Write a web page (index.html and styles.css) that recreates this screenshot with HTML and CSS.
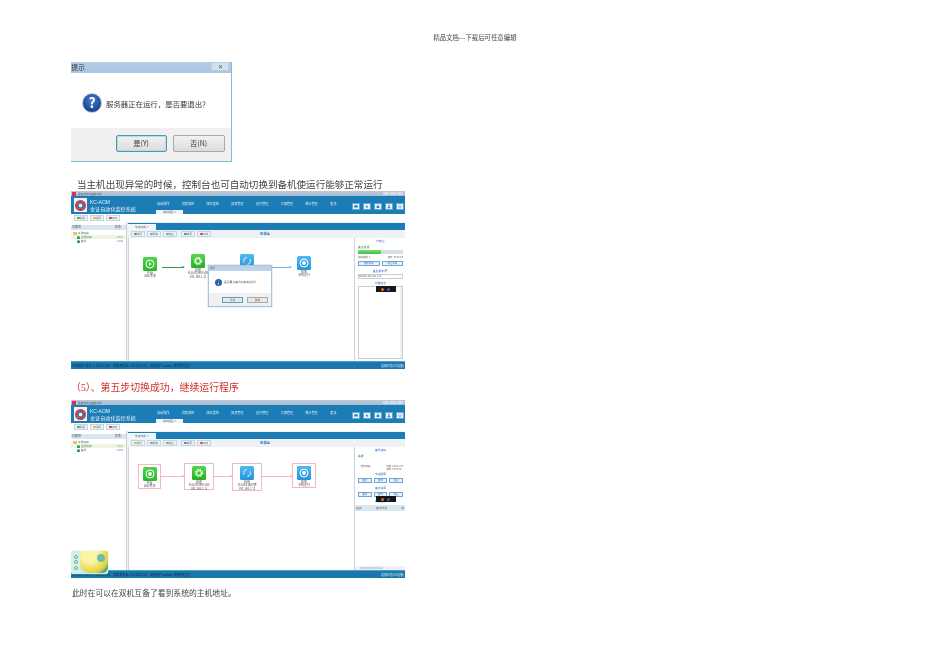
FILE: index.html
```html
<!DOCTYPE html>
<html lang="zh">
<head>
<meta charset="utf-8">
<title>精品文档</title>
<link rel="stylesheet" href="styles.css">
</head>
<body>
<svg class="defs" width="0" height="0" aria-hidden="true">
  <symbol id="i-play" viewBox="0 0 14 14"><circle cx="7" cy="7" r="4" fill="none" stroke="#fff" stroke-width="1"/><path d="M6 5l2.6 2L6 9z" fill="#fff"/></symbol>
  <symbol id="i-gear" viewBox="0 0 14 14"><circle cx="7" cy="7" r="2.6" fill="none" stroke="#fff" stroke-width="1.8" stroke-dasharray="1.6 .5"/><circle cx="7" cy="7" r="3.8" fill="none" stroke="#fff" stroke-width=".9" stroke-dasharray="1.4 1.6"/></symbol>
  <symbol id="i-sync" viewBox="0 0 14 14"><path d="M4 8.5A3.4 3.4 0 0 1 7 3.6M10 5.5A3.4 3.4 0 0 1 7 10.4" fill="none" stroke="#fff" stroke-width="1.1" stroke-dasharray="1.4 .6"/></symbol>
  <symbol id="i-stop" viewBox="0 0 14 14"><circle cx="7" cy="7" r="4" fill="none" stroke="#fff" stroke-width="1"/><circle cx="7" cy="7" r="1.9" fill="#fff"/></symbol>
  <symbol id="i-monitor" viewBox="0 0 8 8"><rect x="1.2" y="2" width="5.6" height="3.6" fill="#2a7fb4"/></symbol>
  <symbol id="i-cursor" viewBox="0 0 8 8"><path d="M2.5 1.5l3.4 3-1.6.2.8 1.6-.8.3-.7-1.6-1.1 1z" fill="#2a7fb4"/></symbol>
  <symbol id="i-lock" viewBox="0 0 8 8"><rect x="1.8" y="3.4" width="4.4" height="3" fill="#2a7fb4"/><path d="M2.8 3.4V2.6a1.2 1.2 0 0 1 2.4 0v.8" fill="none" stroke="#2a7fb4" stroke-width=".7"/></symbol>
  <symbol id="i-user" viewBox="0 0 8 8"><circle cx="4" cy="2.8" r="1.4" fill="#2a7fb4"/><path d="M1.6 6.6c.2-1.6 1.2-2 2.4-2s2.2.4 2.4 2z" fill="#2a7fb4"/></symbol>
  <symbol id="i-power" viewBox="0 0 8 8"><path d="M2.6 2.6a2.1 2.1 0 1 0 2.8 0" fill="none" stroke="#2a7fb4" stroke-width=".8"/><path d="M4 1.4v2.4" stroke="#2a7fb4" stroke-width=".8"/></symbol>
</svg>

<header class="running-head">精品文档---下载后可任意编辑</header>

<main class="sheet">
  <section class="msgbox">
    <div class="msg-title"><span class="msg-title-text">提示</span><span class="msg-close">✕</span></div>
    <div class="msg-body">
      <span class="msg-q">?</span>
      <span class="msg-text">服务器正在运行，是否要退出？</span>
    </div>
    <div class="msg-foot">
      <span class="msg-btn msg-btn-on">是(Y)</span>
      <span class="msg-btn msg-btn-no">否(N)</span>
    </div>
  </section>

  <p class="cap cap-one">当主机出现异常的时候，控制台也可自动切换到备机使运行能够正常运行</p>

  <section class="app">
    <div class="a-title"><span class="a-ico"></span><span class="a-title-text">金证自动化监控系统</span><span class="a-win"><i></i><i></i><i></i></span></div>
    <div class="a-banner">
      <div class="a-logo"><span></span></div>
      <div class="a-brand"><b>KC-AOM</b><span>金证自动化监控系统</span></div>
      <div class="a-navwrap">
        <nav class="a-nav"><span>自动操作</span><span>流程监控</span><span>版本发布</span><span>报表管理</span><span>运行管理</span><span>大屏管理</span><span>统计管理</span><span>更多</span></nav>
        <div class="a-tab">流程视图 ×</div>
      </div>
      <div class="a-tools">
        <svg><use href="#i-monitor"/></svg><svg><use href="#i-cursor"/></svg><svg><use href="#i-lock"/></svg><svg><use href="#i-user"/></svg><svg><use href="#i-power"/></svg>
      </div>
    </div>
    <div class="a-quick"><span><i class="dot dot-green"></i>刷新</span><span><i class="dot dot-amber"></i>关闭</span><span><i class="dot dot-red"></i>手动</span></div>
    <div class="a-body">
      <aside class="a-left">
        <div class="a-lhead"><span>功能项</span><span>状态</span></div>
        <div class="a-row"><span><i class="folder"></i>系统切换</span></div>
        <div class="a-row a-row-in a-row-on"><span><i class="person"></i>主机切换</span><em class="ok">2321</em></div>
        <div class="a-row a-row-in"><span><i class="person"></i>备机</span><em>2184</em></div>
      </aside>
      <div class="a-main">
        <div class="a-strip"><span>节点流程 ×</span></div>
        <div class="a-bar"><span><i class="dot dot-green"></i>运行</span><span><i class="dot dot-grey"></i>暂停</span><span><i class="dot dot-grey"></i>停止</span><span class="a-bar-sep"><i class="dot dot-blue"></i>设置</span><span><i class="dot dot-red"></i>手动</span><b>已停止</b></div>
        <div class="a-work">
          <div class="a-canvas">
            <div class="node n1"><svg class="ic g1"><use href="#i-play"/></svg><span>开始</span><span>自动考虑</span></div>
            <div class="node n2"><svg class="ic g2"><use href="#i-gear"/></svg><span>启用</span><span>节点A切换节点B</span><span>192.168.1.11</span></div>
            <div class="node n3"><svg class="ic b1"><use href="#i-sync"/></svg></div>
            <div class="node n4"><svg class="ic b1"><use href="#i-stop"/></svg><span>结束</span><span>系统运行</span></div>
            <i class="link l-green"></i>
            <i class="link l-blue"></i>
            <div class="mini">
              <div class="mini-title">提示</div>
              <div class="mini-body"><span class="mini-q">i</span><span>是否要从备机切换到主机？</span></div>
              <div class="mini-foot"><span class="mini-on">重试</span><span>取消</span></div>
            </div>
          </div>
          <aside class="a-right">
            <div class="r-head">已停止</div>
            <div class="r-green">备主进程</div>
            <div class="r-progress"><span></span></div>
            <div class="r-kv"><span>切换次数: 1</span><span>耗时: 00:00:00</span></div>
            <div class="r-btns"><span>启动切换</span><span>停止切换</span></div>
            <div class="r-head">备主服务(IP)</div>
            <div class="r-input">NMAXA 192.168.1.10</div>
            <div class="r-head r-gap">线路信息</div>
            <div class="r-list"><i></i></div>
            <div class="blackbar"><i></i><i></i></div>
          </aside>
        </div>
      </div>
    </div>
    <div class="a-status"><span>本机版本: 版本: 1.2013.10.01</span><span>服务器地址: 127.0.0.1:80</span><span>当前用户: admin [系统管理员]</span><em>连接状态[已连接]</em></div>
  </section>

  <p class="cap cap-red">（5）、第五步切换成功，继续运行程序</p>

  <section class="app">
    <div class="a-title"><span class="a-ico"></span><span class="a-title-text">金证自动化监控系统</span><span class="a-win"><i></i><i></i><i></i></span></div>
    <div class="a-banner">
      <div class="a-logo"><span></span></div>
      <div class="a-brand"><b>KC-AOM</b><span>金证自动化监控系统</span></div>
      <div class="a-navwrap">
        <nav class="a-nav"><span>自动操作</span><span>流程监控</span><span>版本发布</span><span>报表管理</span><span>运行管理</span><span>大屏管理</span><span>统计管理</span><span>更多</span></nav>
        <div class="a-tab">流程视图 ×</div>
      </div>
      <div class="a-tools">
        <svg><use href="#i-monitor"/></svg><svg><use href="#i-cursor"/></svg><svg><use href="#i-lock"/></svg><svg><use href="#i-user"/></svg><svg><use href="#i-power"/></svg>
      </div>
    </div>
    <div class="a-quick"><span><i class="dot dot-green"></i>刷新</span><span><i class="dot dot-amber"></i>关闭</span><span><i class="dot dot-red"></i>手动</span></div>
    <div class="a-body">
      <aside class="a-left">
        <div class="a-lhead"><span>功能项</span><span>状态</span></div>
        <div class="a-row"><span><i class="folder"></i>系统切换</span></div>
        <div class="a-row a-row-in a-row-on"><span><i class="person"></i>主机切换</span><em class="ok">2321</em></div>
        <div class="a-row a-row-in"><span><i class="person"></i>备机</span><em>2184</em></div>
        <div class="lemon"><div class="lemon-side"><i></i><i></i><i></i></div><div class="lemon-fruit"><i></i></div></div>
      </aside>
      <div class="a-main">
        <div class="a-strip"><span>节点流程 ×</span></div>
        <div class="a-bar"><span><i class="dot dot-amber"></i>运行</span><span><i class="dot dot-grey"></i>暂停</span><span><i class="dot dot-grey"></i>停止</span><span class="a-bar-sep"><i class="dot dot-blue"></i>设置</span><span><i class="dot dot-red"></i>手动</span><b>已停止</b></div>
        <div class="a-work">
          <div class="a-canvas">
            <div class="node p1"><svg class="ic g1"><use href="#i-stop"/></svg><span>开始</span><span>自动考虑</span></div>
            <div class="node p2"><svg class="ic g2"><use href="#i-gear"/></svg><span>启用</span><span>节点A切换节点B</span><span>192.168.1.11</span></div>
            <div class="node p3"><svg class="ic b1"><use href="#i-sync"/></svg><span>启用</span><span>节点B主备切换</span><span>192.168.1.12</span></div>
            <div class="node p4"><svg class="ic b1"><use href="#i-stop"/></svg><span>结束</span><span>系统运行</span></div>
            <i class="link pl1"></i><i class="link pl2"></i><i class="link pl3"></i>
          </div>
          <aside class="a-right">
            <div class="r-head">备机切换</div>
            <div class="r-green r-tall">等候</div>
            <div class="r-check"><span>□ 自动切换</span><span>切换: 2014.1.20<br>耗时: 00:00:00</span></div>
            <div class="r-head">节点配置</div>
            <div class="r-btns r-three"><span>备份</span><span>启动</span><span>停止</span></div>
            <div class="r-head r-gap-b">备份设置</div>
            <div class="r-btns r-three"><span>备份</span><span>启动</span><span>停止</span></div>
            <div class="r-head r-gap-c">线路信息</div>
            <div class="r-table"><div class="r-thead"><span>名称</span><span>运行时间</span><span>状</span></div></div>
            <div class="r-scroll"><span></span></div>
            <div class="blackbar blackbar-low"><i></i><i></i></div>
          </aside>
        </div>
      </div>
    </div>
    <div class="a-status"><span>本机版本: 版本: 1.2013.10.01</span><span>服务器地址: 127.0.0.1:80</span><span>当前用户: admin [系统管理员]</span><em>连接状态[已连接]</em></div>
  </section>

  <p class="cap cap-last">此时在可以在双机互备了看到系统的主机地址。</p>
</main>
</body>
</html>
```
FILE: styles.css
```css
* { box-sizing: border-box; }
html, body { margin: 0; padding: 0; background: #fff; }
body { width: 950px; height: 672px; overflow: hidden; font-family: "Liberation Serif", "Noto Sans CJK SC", serif; color: #222; }
.defs { position: absolute; }
.running-head { padding-top: 34px; height: 42px; line-height: 8px; font-size: 6.4px; text-align: center; color: #444; filter: blur(.25px); }
.sheet { margin-left: 71px; width: 334px; }
.cap { margin: 0; height: 10px; line-height: 10px; white-space: nowrap; filter: blur(.25px); }
.cap-one { margin-top: 18px; margin-bottom: 1px; padding-left: 6px; font-size: 9.55px; color: #444; }
.cap-red { margin-top: 14px; margin-bottom: 7px; font-size: 9.9px; color: #d2332c; }
.cap-last { margin-top: 11px; padding-left: 1px; font-size: 7.8px; color: #444; }

/* first message box */
.msgbox { margin-top: 20px; width: 161px; height: 100px; display: flex; flex-direction: column; background: #fff; border-right: 1px solid #7cc0d8; border-bottom: 1px solid #7cc0d8; filter: blur(.5px); font-family: "Noto Sans CJK SC", sans-serif; overflow: hidden; }
.msg-title { height: 11px; flex: none; display: flex; justify-content: space-between; align-items: center; background: linear-gradient(#b4cde6, #a9c6e4); }
.msg-title-text { font-size: 7px; line-height: 9px; color: #333; }
.msg-close { width: 18px; height: 8px; margin: 0 2px 2px 0; line-height: 8px; text-align: center; font-size: 6px; color: #555; background: #d3e0ee; border: 1px solid #bccde0; border-top: 0; }
.msg-body { height: 55px; flex: none; display: flex; align-items: center; gap: 4px; padding: 5px 0 0 11px; }
.msg-q { width: 20px; height: 20px; border-radius: 50%; flex: none; text-align: center; line-height: 17px; font-size: 14px; font-weight: 700; color: #fff; background: radial-gradient(circle at 50% 35%, #4a7fd0, #1d4596 70%); border: 1.5px solid #b9c7da; }
.msg-text { font-size: 7.4px; color: #333; white-space: nowrap; }
.msg-foot { flex: 1; display: flex; gap: 6px; padding: 7px 6px 0 45px; background: #f0f0f0; }
.msg-btn { height: 17px; line-height: 15px; text-align: center; font-size: 7px; color: #333; border-radius: 2px; background: linear-gradient(#f2f2f2, #dcdcdc); border: 1px solid #a9a9a9; }
.msg-btn-on { width: 51px; border-color: #4f97b3; box-shadow: inset 0 0 0 1px #b4dcec; }
.msg-btn-no { width: 53px; }

/* application screenshot */
.app { position: relative; width: 334px; height: 178px; display: flex; flex-direction: column; background: #eef2f5; font-family: "Noto Sans CJK SC", sans-serif; font-size: 3px; line-height: 4px; color: #555; filter: blur(.45px); overflow: hidden; }
.a-title { height: 5px; flex: none; display: flex; align-items: center; gap: 2px; padding: 0 1px; background: linear-gradient(#b9c9da, #a9bdd2); font-size: 2.6px; }
.a-ico { width: 4px; height: 4px; background: #d8305a; }
.a-win { margin-left: auto; display: flex; gap: 1px; padding-right: 1px; }
.a-win i { width: 6px; height: 3px; background: #d4dde6; }
.a-banner { height: 18px; flex: none; display: flex; background: #1c7db6; color: #fff; }
.a-logo { width: 13px; height: 14px; margin: 2px 0 0 3px; flex: none; display: flex; align-items: center; justify-content: center; background: #eef4f8; }
.a-logo span { width: 11px; height: 11px; border-radius: 50%; border: 2px solid #cf3b3b; box-shadow: inset 0 0 0 1.5px #2a5f9e; }
.a-brand { width: 66px; margin: 3px 0 0 3px; flex: none; display: flex; flex-direction: column; gap: 1px; font-size: 5.1px; line-height: 6px; color: #e6f2f9; }
.a-brand b { font-family: "Liberation Sans", sans-serif; font-weight: 400; font-size: 5px; }
.a-navwrap { width: 192px; flex: none; padding-top: 5px; display: flex; flex-direction: column; }
.a-nav { display: flex; gap: 12.4px; height: 9px; font-size: 3.1px; line-height: 5px; white-space: nowrap; color: #dff0fa; padding-left: 1px; }
.a-nav span { flex: none; }
.a-tab { width: 27px; height: 4px; text-align: center; line-height: 4px; background: #eef6fb; color: #557; font-size: 2.6px; white-space: nowrap; }
.a-tools { display: flex; gap: 3px; padding-top: 7px; margin-left: 4px; }
.a-tools svg { width: 8px; height: 7px; flex: none; background: #eef5fa; border: 1px solid #5fa8d2; }
.a-quick { height: 8px; flex: none; display: flex; gap: 2px; padding: 1px 0 0 3px; background: #fff; }
.a-quick span { width: 14px; height: 6px; display: flex; align-items: center; justify-content: center; gap: .5px; background: #eaf2f8; border: 1px solid #c4d6e4; font-size: 2.4px; }
.dot { width: 2.5px; height: 2.5px; flex: none; border-radius: 50%; }
.dot-green { background: #3aa64c; }
.dot-amber { background: #e2b23c; }
.dot-red { background: #cf3d33; }
.dot-grey { background: #8b9aa8; }
.dot-blue { background: #3f7fc4; }
.a-body { flex: 1; min-height: 0; display: flex; }
.a-left { position: relative; width: 56px; flex: none; background: #fff; border-right: 1px solid #c9d2d9; padding-top: 3px; }
.a-lhead { height: 5px; padding: 0 5px 0 1px; margin-bottom: 1px; display: flex; justify-content: space-between; background: #d9e5ef; line-height: 5px; }
.a-row { height: 4px; padding: 0 3px 0 2px; display: flex; justify-content: space-between; line-height: 4px; font-size: 2.7px; white-space: nowrap; }
.a-row span { display: flex; align-items: center; gap: 1px; }
.a-row-in { padding-left: 6px; color: #3a7a46; }
.a-row-on { background: #eef5e6; }
.a-row-in em { font-style: normal; color: #3f6fc0; }
.a-row-in em.ok { color: #6ea04a; }
.folder { width: 4px; height: 3px; background: #e7c560; }
.person { width: 3px; height: 3px; border-radius: 50% 50% 0 0; background: #3d9a4a; }
.a-main { flex: 1; min-width: 0; display: flex; flex-direction: column; padding-left: 1px; }
.a-strip { height: 7px; margin-top: 1px; flex: none; background: #1c7db6; }
.a-strip span { display: block; width: 28px; height: 7px; background: #eef6fb; text-align: center; line-height: 6px; font-size: 2.7px; border-top: 1px solid #1c7db6; }
.a-bar { position: relative; height: 8px; flex: none; display: flex; gap: 2px; padding: 1px 0 0 3px; }
.a-bar span { width: 14px; height: 6px; display: flex; align-items: center; justify-content: center; gap: .5px; background: #eaf2f8; border: 1px solid #c4d6e4; font-size: 2.4px; }
.a-bar .a-bar-sep { margin-left: 2px; }
.a-bar b { margin-left: 47px; font-weight: 700; color: #2266c4; font-size: 3.4px; line-height: 6px; }
.a-work { flex: 1; min-height: 0; display: flex; }
.a-canvas { position: relative; width: 226px; flex: none; background: #fff; border-left: 1px solid #ccd4da; }
.node { position: absolute; display: flex; flex-direction: column; align-items: center; font-size: 2.9px; line-height: 3.4px; white-space: nowrap; color: #556; }
.ic { width: 14px; height: 14px; margin-bottom: 1px; flex: none; border-radius: 1.5px; }
.g1 { background: linear-gradient(#4bd64b, #2bb52b); }
.g2 { background: linear-gradient(#52d94a, #23b021); }
.b1 { background: linear-gradient(#4db9ef, #2a93de); }
.n1 { left: 13px; top: 19px; width: 16px; }
.n2 { left: 51px; top: 16px; width: 36px; }
.n3 { left: 110px; top: 16px; width: 16px; }
.n4 { left: 167px; top: 18px; width: 16px; }
.link { position: absolute; display: block; height: 1px; }
.link::after { content: ""; position: absolute; right: -1px; top: -1px; border-left: 3px solid currentColor; border-top: 1.5px solid transparent; border-bottom: 1.5px solid transparent; }
.l-green { left: 33px; top: 29px; width: 22px; background: #2f9a4b; color: #2f9a4b; }
.l-blue { left: 143px; top: 29px; width: 19px; background: #74b9ea; color: #74b9ea; }
.mini { position: absolute; left: 79px; top: 27px; width: 64px; height: 42px; display: flex; flex-direction: column; background: #fff; border: 1px solid #a9c4d8; box-shadow: 0 0 1px #7c9ab0; }
.mini-title { height: 5px; flex: none; padding-left: 1px; background: #bcd2e6; line-height: 5px; font-size: 2.6px; }
.mini-body { height: 22px; flex: none; display: flex; align-items: center; gap: 2px; padding-left: 6px; font-size: 2.8px; white-space: nowrap; }
.mini-q { width: 7px; height: 7px; flex: none; border-radius: 50%; text-align: center; line-height: 7px; background: #2a5cb0; color: #fff; font-size: 5px; }
.mini-foot { flex: 1; display: flex; justify-content: flex-end; gap: 4px; padding: 4px 3px 0 0; background: #f0f0f0; }
.mini-foot span { width: 21px; height: 6px; text-align: center; line-height: 5px; background: #e8e8e8; border: 1px solid #aaa; font-size: 2.6px; }
.mini-foot .mini-on { border-color: #5f9fc0; }
.p1, .p2, .p3, .p4 { border: 1px solid #f5b6c6; padding-top: 2px; }
.p1 { left: 9px; top: 17px; width: 23px; height: 25px; }
.p2 { left: 55px; top: 16px; width: 30px; height: 27px; }
.p3 { left: 103px; top: 16px; width: 30px; height: 28px; }
.p4 { left: 163px; top: 16px; width: 24px; height: 25px; }
.pl1 { left: 32px; top: 29px; width: 23px; background: #f5b6c6; color: #f5b6c6; }
.pl2 { left: 85px; top: 29px; width: 18px; background: #f5b6c6; color: #f5b6c6; }
.pl3 { left: 133px; top: 29px; width: 30px; background: #f5b6c6; color: #f5b6c6; }
.a-right { position: relative; flex: 1; min-width: 0; display: flex; flex-direction: column; padding: 1px 2px 2px 3px; background: #fff; border-left: 1px solid #ccd4da; overflow: hidden; }
.r-head { height: 5px; flex: none; text-align: center; color: #2266c4; line-height: 5px; font-size: 2.8px; white-space: nowrap; }
.r-green { height: 5px; flex: none; margin-top: 1px; color: #2f8a3a; line-height: 5px; font-size: 2.8px; }
.r-tall { margin-bottom: 6px; }
.r-progress { height: 4px; flex: none; background: #d6dee4; }
.r-progress span { display: block; width: 51%; height: 4px; background: linear-gradient(#7cdc7c, #3bbf4c); }
.r-kv { height: 7px; flex: none; display: flex; justify-content: space-between; line-height: 7px; font-size: 2.4px; white-space: nowrap; }
.r-btns { height: 5px; flex: none; display: flex; gap: 2px; margin-bottom: 3px; }
.r-btns span { flex: 1; text-align: center; line-height: 3px; background: #e9f3fb; border: 1px solid #6da6d8; font-size: 2.4px; color: #3a6ea8; }
.r-three { margin-bottom: 0; margin-top: 1px; }
.r-input { height: 5px; flex: none; border: 1px solid #c6ced4; line-height: 3px; font-size: 2.4px; white-space: nowrap; }
.r-gap { margin-top: 2px; }
.r-gap-b { margin-top: 3px; }
.r-gap-c { margin-top: 2px; }
.r-list { position: relative; flex: 1; min-height: 0; border: 1px solid #c6ced4; background: #fff; }
.r-list i { position: absolute; right: 0; top: 0; bottom: 0; width: 2px; background: #eef1f3; }
.r-check { height: 7px; flex: none; display: flex; justify-content: space-between; font-size: 2.4px; line-height: 3px; white-space: nowrap; }
.r-table { flex: 1; min-height: 0; margin: 1px -2px 0 -3px; }
.r-thead { height: 6px; display: flex; justify-content: space-between; padding: 0 1px; background: #dae7f0; line-height: 6px; font-size: 2.8px; }
.r-scroll { height: 4px; flex: none; margin: 0 -2px -2px -3px; padding: 1px 22px 1px 5px; background: #eef1f3; }
.r-scroll span { display: block; height: 2px; background: #ccd3d9; }
.blackbar { position: absolute; left: 21px; top: 48px; width: 20px; height: 6px; display: flex; align-items: center; gap: 3px; padding-left: 5px; background: #1a1714; }
.blackbar-low { top: 49px; }
.blackbar i { width: 3px; height: 3px; border-radius: 50%; background: #e0702a; }
.blackbar i + i { background: #3a5fc0; }
.a-status { height: 8px; flex: none; display: flex; gap: 3px; align-items: center; padding: 0 0 0 1px; background: #1a76ac; border-top: 1px solid #4aa0cc; color: #08304c; font-size: 3px; white-space: nowrap; }
.a-status em { margin-left: auto; padding-right: 1px; font-style: normal; color: #cfe6f4; }
.lemon { position: absolute; left: 0; bottom: -4px; width: 37px; height: 23px; display: flex; background: #c6eee0; border-radius: 2.5px; overflow: hidden; box-shadow: 0 0 1.5px #a5e2cf; }
.lemon-side { width: 9px; flex: none; display: flex; flex-direction: column; align-items: center; justify-content: space-around; padding: 3px 0; background: #d4f1e6; }
.lemon-side i { width: 4px; height: 4px; border-radius: 50%; border: 1px solid #6fae96; }
.lemon-fruit { position: relative; flex: 1; margin-bottom: 1px; border-radius: 0 0 6px 10px; background: radial-gradient(circle at 35% 15%, #fbf4a8 0 8px, #ecdf58 15px, #d8d24a 19px, #2f9a80 23px); }
.lemon-fruit i { position: absolute; right: 3px; top: 3px; width: 8px; height: 8px; border-radius: 50%; background: #6fbcae; }
```
